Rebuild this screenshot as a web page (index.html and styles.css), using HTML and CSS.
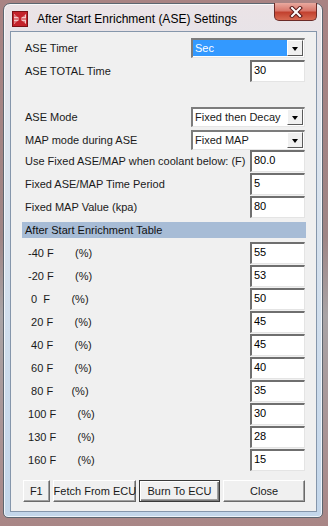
FILE: index.html
```html
<!DOCTYPE html>
<html lang="en">
<head>
    <meta charset="UTF-8">
    <meta name="viewport" content="width=device-width, initial-scale=1.0">
    <title>After Start Enrichment (ASE) Settings</title>
    <link rel="stylesheet" href="styles.css">
</head>
<body>
<div class="window">
    <div class="titlebar">
        <svg class="app-icon" width="16" height="16" viewBox="0 0 16 16">
            <rect x="0.5" y="0.5" width="15" height="15" fill="#c4232b" stroke="#7a1216"/>
            <path d="M2 3 L7 7 L7 9 L2 13 Z" fill="#f3c9c9"/>
            <path d="M14 3 L9 7 L9 9 L14 13 Z" fill="#f3c9c9"/>
            <path d="M2 5 H13 M2 8 H14 M2 11 H13" stroke="#c4232b" stroke-width="1"/>
        </svg>
        <span class="title">After Start Enrichment (ASE) Settings</span>
        <button class="close-x">
            <svg width="14" height="12" viewBox="0 0 14 12">
                <path d="M3 2 L11 10 M11 2 L3 10" stroke="#5a1a1a" stroke-width="4" stroke-linecap="square"/>
                <path d="M3 2 L11 10 M11 2 L3 10" stroke="#fff" stroke-width="2" stroke-linecap="square"/>
            </svg>
        </button>
    </div>
    <div class="client">
        <div class="row combo-row">
            <span class="label">ASE Timer</span>
            <div class="combo focus"><span class="combo-text">Sec</span><span class="combo-btn"></span></div>
        </div>
        <div class="row edit-row gap-2">
            <span class="label">ASE TOTAL Time</span>
            <div class="field">30</div>
        </div>

        <div class="row combo-row gap-25">
            <span class="label">ASE Mode</span>
            <div class="combo"><span class="combo-text">Fixed then Decay</span><span class="combo-btn"></span></div>
        </div>
        <div class="row combo-row gap-3">
            <span class="label">MAP mode during ASE</span>
            <div class="combo"><span class="combo-text">Fixed MAP</span><span class="combo-btn"></span></div>
        </div>
        <div class="row edit-row">
            <span class="label">Use Fixed ASE/MAP when coolant below: (F)</span>
            <div class="field">80.0</div>
        </div>
        <div class="row edit-row gap-1">
            <span class="label">Fixed ASE/MAP Time Period</span>
            <div class="field">5</div>
        </div>
        <div class="row edit-row gap-1">
            <span class="label">Fixed MAP Value (kpa)</span>
            <div class="field">80</div>
        </div>

        <div class="section-bar">After Start Enrichment Table</div>

        <div class="table">
            <div class="row edit-row"><span class="temp"> -40 F       (%)</span><div class="field">55</div></div>
            <div class="row edit-row"><span class="temp"> -20 F       (%)</span><div class="field">53</div></div>
            <div class="row edit-row"><span class="temp">  0  F       (%)</span><div class="field">50</div></div>
            <div class="row edit-row"><span class="temp">  20 F       (%)</span><div class="field">45</div></div>
            <div class="row edit-row"><span class="temp">  40 F       (%)</span><div class="field">45</div></div>
            <div class="row edit-row"><span class="temp">  60 F       (%)</span><div class="field">40</div></div>
            <div class="row edit-row"><span class="temp">  80 F      (%)</span><div class="field">35</div></div>
            <div class="row edit-row"><span class="temp"> 100 F       (%)</span><div class="field">30</div></div>
            <div class="row edit-row"><span class="temp"> 130 F       (%)</span><div class="field">28</div></div>
            <div class="row edit-row"><span class="temp"> 160 F       (%)</span><div class="field">15</div></div>
        </div>

        <div class="buttons">
            <button class="btn btn-small">F1</button>
            <button class="btn">Fetch From ECU</button>
            <button class="btn btn-default">Burn To ECU</button>
            <button class="btn">Close</button>
        </div>
    </div>
</div>
</body>
</html>
```

FILE: styles.css
```css
body {
    margin: 0;
    width: 328px;
    height: 526px;
    overflow: hidden;
    background: linear-gradient(to bottom, #a98383 0%, #9f8585 45%, #a9a4a6 60%, #a98686 100%);
    font-family: "Liberation Sans", Arial, sans-serif;
    font-size: 11px;
    color: #1a1a1a;
}
.window {
    box-sizing: border-box;
    width: 320px;
    height: 515px;
    margin: 3px 5px 0 3px;
    padding: 0 5px 5px 6px;
    border: 1px solid #5d6670;
    border-radius: 7px 7px 5px 5px;
    background: linear-gradient(to bottom, #ebe3e6 0%, #dde5ee 25%, #cddcec 70%, #c3d6ea 100%);
    box-shadow: inset 0 0 0 1px rgba(255, 255, 255, 0.7);
}
.titlebar {
    height: 27px;
    display: flex;
    align-items: center;
}
.app-icon {
    margin-left: 2px;
    margin-right: 9px;
    margin-top: 2px;
}
.title {
    font-size: 12px;
    color: #000;
    margin-top: 3px;
}
.close-x {
    margin-left: auto;
    align-self: flex-start;
    margin-top: -1px;
    width: 43px;
    height: 18px;
    padding: 0;
    border: 1px solid #6b2b28;
    border-top: none;
    border-radius: 0 0 5px 5px;
    background: linear-gradient(to bottom, #e9a99f 0%, #d8776b 45%, #c2412f 55%, #d76a52 100%);
    display: flex;
    align-items: center;
    justify-content: center;
}
.close-x svg {
    display: block;
}
.client {
    box-sizing: border-box;
    height: 481px;
    background: #f0f0f0;
    border: 1px solid #8596ab;
    padding: 6px 11px 0 11px;
}
.row {
    display: flex;
    justify-content: space-between;
    align-items: center;
}
.combo-row {
    height: 20px;
}
.edit-row {
    height: 22px;
}
.gap-1 { margin-top: 1px; }
.gap-2 { margin-top: 2px; }
.gap-3 { margin-top: 3px; }
.gap-25 { margin-top: 25px; }
.label {
    padding-left: 3px;
}
.combo {
    box-sizing: border-box;
    width: 114px;
    height: 20px;
    display: flex;
    border-style: solid;
    border-width: 2px 1px 1px 2px;
    border-color: #7c7c7c #e6e6e6 #e6e6e6 #7c7c7c;
    background: #fff;
    padding: 0 1px 1px 0;
}
.combo-text {
    flex: 1;
    padding-left: 2px;
    line-height: 16px;
    white-space: nowrap;
}
.combo.focus .combo-text {
    background: #3399ff;
    color: #fff;
}
.combo-btn {
    box-sizing: border-box;
    width: 16px;
    position: relative;
    background: #f0f0f0;
    border: 1px solid;
    border-color: #fff #5a5a5a #5a5a5a #fff;
}
.combo-btn::after {
    content: "";
    position: absolute;
    left: 4px;
    top: 6px;
    border-left: 3.5px solid transparent;
    border-right: 3.5px solid transparent;
    border-top: 4px solid #000;
}
.field {
    box-sizing: border-box;
    width: 55px;
    height: 22px;
    background: #fff;
    border-style: solid;
    border-width: 2px 1px 1px 2px;
    border-color: #6f6f6f #e4e4e4 #e4e4e4 #6f6f6f;
    padding-left: 2px;
    line-height: 17px;
    color: #000;
}
.section-bar {
    margin-top: 4px;
    height: 16px;
    line-height: 16px;
    padding-left: 3px;
    margin-right: -1px;
    background: #a7bcd6;
    color: #111;
}
.table {
    margin-top: 4px;
    display: flex;
    flex-direction: column;
    gap: 1px;
}
.temp {
    white-space: pre;
    padding-left: 3px;
}
.buttons {
    margin-top: 9px;
    margin-left: 1px;
    display: flex;
    gap: 3px;
}
.btn {
    box-sizing: border-box;
    width: 83px;
    height: 22px;
    padding: 0;
    white-space: nowrap;
    font-family: "Liberation Sans", Arial, sans-serif;
    font-size: 11px;
    color: #1a1a1a;
    background: #f0f0f0;
    border: 1px solid;
    border-color: #fff #6a6a6a #6a6a6a #fff;
    box-shadow: inset -1px -1px 0 #a0a0a0;
}
.btn-small {
    width: 27px;
}
.btn-default {
    border: 1px solid #3a3a3a;
    box-shadow: inset 1px 1px 0 #fff, inset -1px -1px 0 #7a7a7a, inset -2px -2px 0 #a0a0a0;
}
```
